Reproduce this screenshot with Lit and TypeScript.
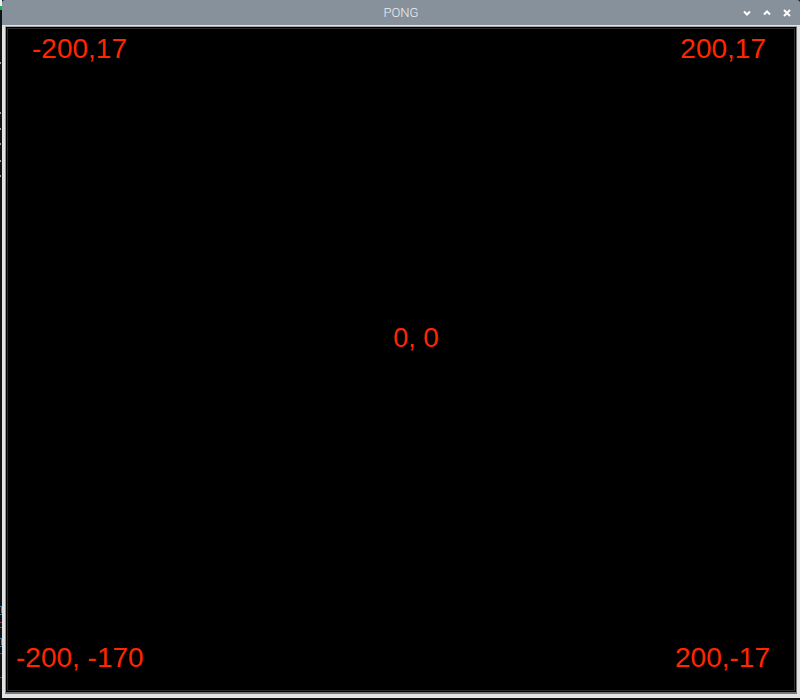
import { LitElement, html, css } from "lit";
import { customElement } from "lit/decorators.js";

@customElement("app-root")
export class AppRoot extends LitElement {
  static styles = css`
    :host {
      display: flex;
      box-sizing: border-box;
      min-height: 100vh;
      background: #101214;
      padding-bottom: 2px;
      font-family: "Liberation Sans", Arial, sans-serif;
    }
    .behind {
      flex: none;
      width: 2px;
      display: flex;
      flex-direction: column;
      justify-content: space-between;
    }
    .marks {
      display: block;
      width: 2px;
    }
    .window {
      flex: 1;
      min-width: 0;
      display: flex;
      flex-direction: column;
    }
    .titlebar {
      display: grid;
      grid-template-columns: 1fr auto 1fr;
      align-items: center;
      height: 25px;
      background: #87919b;
      border-top-left-radius: 3px;
      border-top-right-radius: 3px;
    }
    .title {
      grid-column: 2;
      margin: 0;
      font: 300 13px/25px Roboto, sans-serif;
      color: #eceff1;
    }
    .controls {
      display: flex;
      justify-content: flex-end;
      padding-right: 3px;
    }
    button {
      width: 20px;
      height: 20px;
      padding: 0;
      border: 0;
      background: none;
      display: grid;
      place-items: center;
    }
    button svg {
      display: block;
      fill: none;
      stroke: #fff;
      stroke-width: 2;
    }
    .frame {
      flex: 1;
      display: flex;
      border: solid #e3e3e3;
      border-width: 1px 3px 4px 3px;
    }
    .bevel {
      flex: 1;
      display: flex;
      border: solid;
      border-width: 1px 1px 2px 1px;
      border-color: #a6a6a6 #777 #777 #999;
    }
    .stage {
      flex: 1;
      display: grid;
      grid-template-rows: auto 1fr auto;
      border: 1px solid #000;
      box-shadow: inset 0 0 0 1px #2c2c2c;
      background: #000;
      color: #ff2600;
      font-size: 28px;
      line-height: 32px;
      white-space: pre;
    }
    .row {
      display: flex;
      justify-content: space-between;
    }
    .top {
      padding: 5px 29px 0 25px;
    }
    .middle {
      align-self: center;
      justify-content: center;
      align-items: baseline;
      padding-left: 30px;
      padding-bottom: 32px;
    }
    .small {
      font-size: 27px;
    }
    .bottom {
      padding: 0 25px 17px 9px;
    }
  `;

  render() {
    return html`
      <div class="behind">
        <svg class="marks" height="200" viewBox="0 0 2 200" aria-hidden="true">
          <path fill="#e8eeee" d="M0 0h2v6H0z" />
          <path fill="#1bb34d" d="M0 6h2v4H0z" />
          <path fill="#a0a0a0" d="M0 62h1v2H0zM0 112h1v2H0zM0 128h1v2H0zM0 143h1v2H0zM0 160h1v2H0zM0 175h1v2H0z" />
        </svg>
        <svg class="marks" height="100" viewBox="0 0 2 100" aria-hidden="true">
          <path fill="#3f7ca5" d="M0 8h2v1H0zM1 9h1v6H1zM0 16h2v1H0zM0 40h2v1H0zM1 41h1v6H1zM0 48h2v1H0z" />
          <path fill="#96375c" d="M0 24h2v1H0zM0 29h2v1H0zM0 55h2v1H0zM0 79h2v1H0z" />
        </svg>
      </div>
      <main class="window">
        <header class="titlebar">
          <h1 class="title">PONG</h1>
          <div class="controls">
            <button type="button" aria-label="Minimize">
              <svg width="8" height="8" viewBox="0 0 8 8"><path d="M1 2.5L4 5.5L7 2.5" /></svg>
            </button>
            <button type="button" aria-label="Maximize">
              <svg width="8" height="8" viewBox="0 0 8 8"><path d="M1 5.5L4 2.5L7 5.5" /></svg>
            </button>
            <button type="button" aria-label="Close">
              <svg width="8" height="8" viewBox="0 0 8 8"><path d="M1 1L7 7M7 1L1 7" /></svg>
            </button>
          </div>
        </header>
        <div class="frame">
          <div class="bevel">
            <section class="stage">
              <div class="row top"><span>-200,17</span><span>200,17</span></div>
              <div class="row middle"><span class="small">0, </span><span>0</span></div>
              <div class="row bottom"><span>-200, -170</span><span>200,-17</span></div>
            </section>
          </div>
        </div>
      </main>
    `;
  }
}
